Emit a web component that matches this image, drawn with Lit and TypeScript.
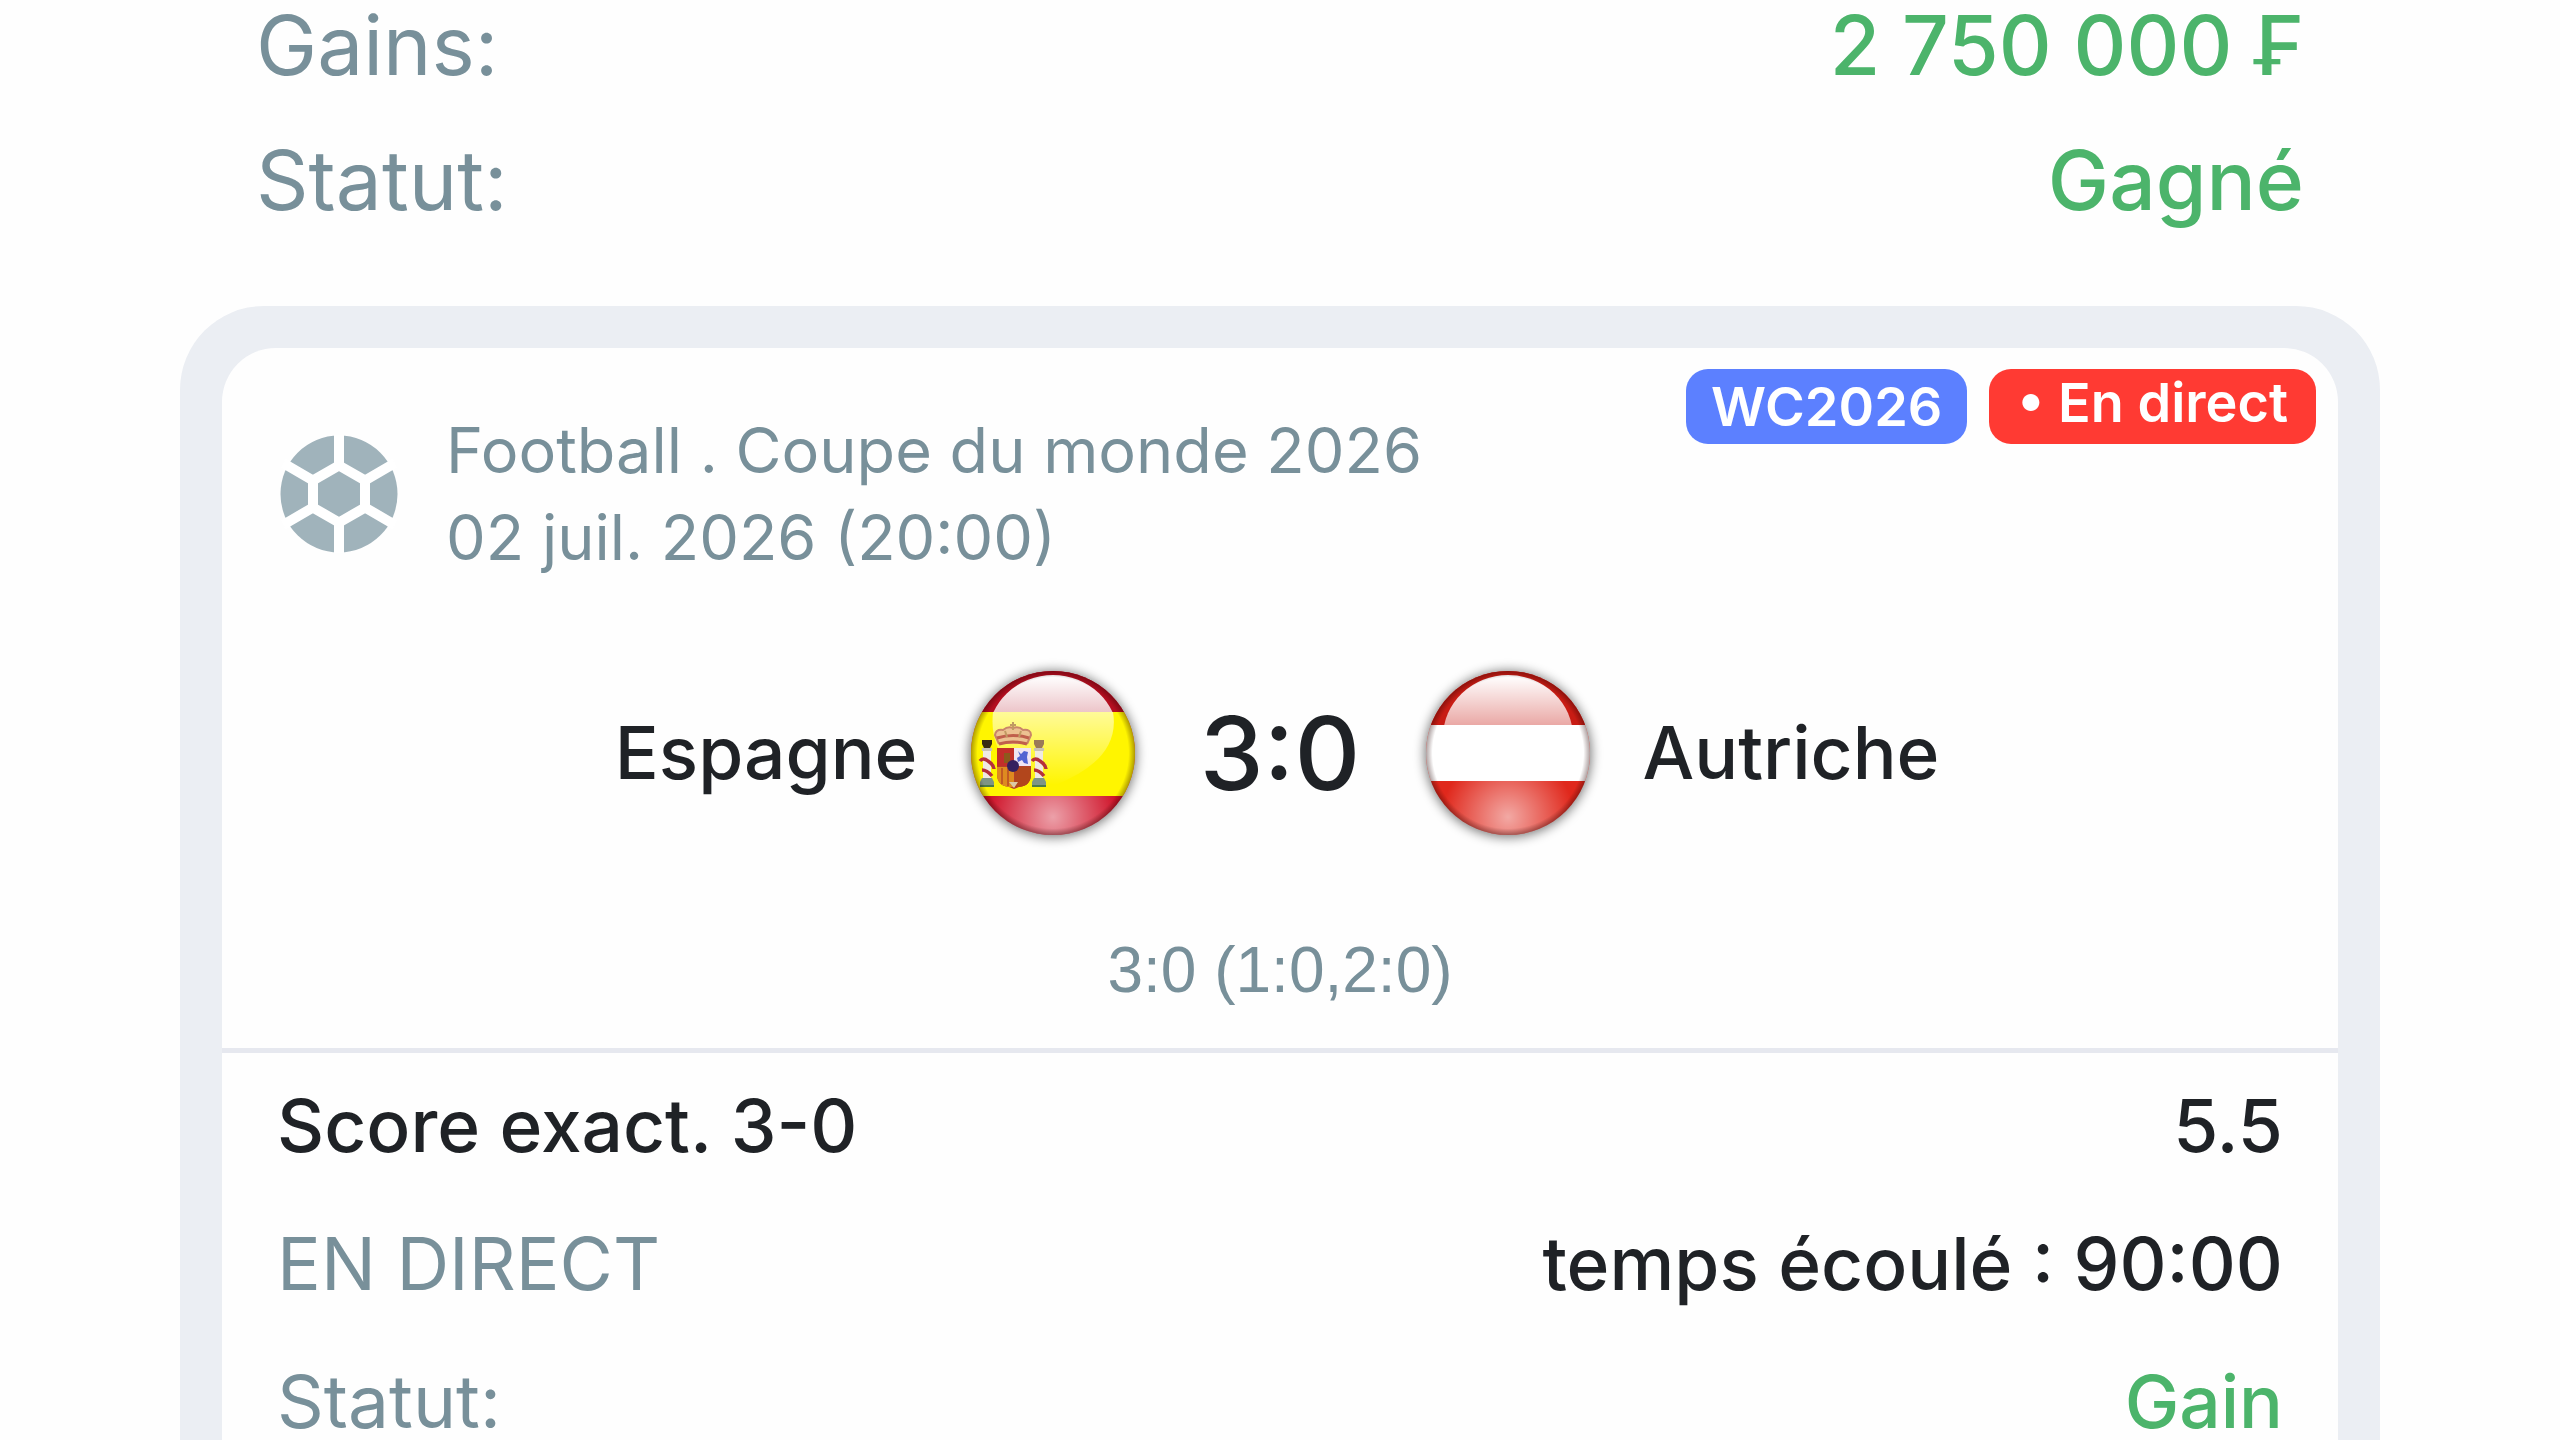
import { LitElement, html, css, svg } from "lit";
import { customElement, property } from "lit/decorators.js";

@customElement("ball-icon")
class BallIcon extends LitElement {
  static styles = css`
    :host { display: block; flex: none; }
    .ball { display: block; width: 118px; height: 118px; }
    .panel { fill: #a0b3bb; }
    .seam { fill: none; stroke: #ffffff; stroke-width: 10; stroke-linejoin: miter; }
  `;
  render() {
    return html`<svg class="ball" viewBox="0 0 118 118" aria-hidden="true">
      <circle class="panel" cx="59" cy="59" r="58.5" />
      <path class="seam" d="M59 30.5 L85 45.5 V72.5 L59 87.5 L33 72.5 V45.5 Z" />
      <path class="seam" d="M59 30.5 V-4 M85 45.5 L115 28 M85 72.5 L115 90 M59 87.5 V122 M33 72.5 L3 90 M33 45.5 L3 28" />
    </svg>`;
  }
}

const pillar = (x: number, cap: string) => svg`
  <g transform="translate(${x} 0)">
    <rect x="-4" y="77" width="8" height="34" fill="#efe9e2" />
    <path d="M-5 69 h10 v4 l-2 4 h-6 l-2 -4 z" fill=${cap} />
    <path d="M-5 77 h10 v3 h-10 z" fill="#c9c2b4" />
    <path d="M-7 90 q3 -4 8 0 q6 4 6 8 M-5 99 q5 0 10 6" fill="none" stroke="#b5303a" stroke-width="3.500" />
    <path d="M-5 107 h10 l2 4 v5 h-14 v-5 z" fill="#7f9585" />
    <path d="M-7 114 h14 v2 h-14 z" fill="#4d7a4a" />
  </g>`;

const spainArms = svg`
  <g>
    ${pillar(16, "#3a2a12")}
    ${pillar(68, "#9a7a58")}
    <path d="M26 77 h34 v26 q0 12 -12 13 l-5 2 l-5 -2 q-12 -1 -12 -13 z" fill="#b5402a" />
    <path d="M26 77 h17 v18 h-17 z" fill="#c22f2a" />
    <path d="M33 82 h6 v10 h-6 z" fill="#8d5a1c" />
    <path d="M43 77 h17 v18 h-17 z" fill="#f0e4f2" />
    <path d="M47 80 l3 3 3 -3 4 1 -1 5 1 7 -4 -1 -2 -3 -4 2 -1 -4 3 -2 z" fill="#5263d2" />
    <path d="M26 96 h17 v20 h-5 q-12 -1 -12 -13 z" fill="#de8a20" />
    <path d="M31 97 v16 M37 97 v18" stroke="#c25a22" stroke-width="2" />
    <path d="M44 96 h16 v7 q0 12 -12 13 h-4 z" fill="#b2461c" />
    <circle cx="42" cy="95" r="6" fill="#35205f" />
    <path d="M38 111 h9 l-4 6 z" fill="#dcc9a4" />
    <path d="M28 73 l-4 -9 q1 -6 8 -5 q5 -4 10 -2 q6 -2 10 2 q8 -1 8 5 l-4 9 z" fill="#ecc191" />
    <path d="M28 73 l-4 -9 q1 -6 8 -5 q5 -4 10 -2 q6 -2 10 2 q8 -1 8 5 l-4 9" fill="none" stroke="#c98569" stroke-width="2" />
    <path d="M26 67 q16 -5 32 0 M28 73 q14 -4 28 0" fill="none" stroke="#c0604c" stroke-width="3" />
    <path d="M42 51 v8 M39 54 h6 M34 60 l2 6 M50 60 l-2 6" stroke="#c09a62" stroke-width="2" />
  </g>`;

@customElement("team-flag")
class TeamFlag extends LitElement {
  @property() country = "";
  static styles = css`
    :host { display: block; flex: none; }
    .flag { display: block; width: 164px; height: 164px; overflow: visible; }
    .shadow { fill: #000000; opacity: 0.55; filter: blur(6px); }
  `;
  render() {
    const spain = this.country === "Espagne";
    const red = spain ? "#cf1228" : "#e0281c";
    const dark = spain ? "#b40e20" : "#c81c14";
    const top = spain ? 41 : 54;
    const bottom = spain ? 125 : 110;
    return html`<svg class="flag" viewBox="0 0 164 164" role="img" aria-label=${this.country}>
      <defs>
        <clipPath id="disc"><circle cx="82" cy="82" r="82" /></clipPath>
        <clipPath id="band"><rect x="0" y="0" width="164" height=${top} /></clipPath>
        <linearGradient id="gloss" gradientUnits="userSpaceOnUse" x1="0" y1="5" x2="0" y2=${top}>
          <stop offset="0" stop-color="#fff" /><stop offset="1" stop-color="#fff" stop-opacity=${spain ? 0.76 : 0.62} />
        </linearGradient>
        <linearGradient id="sheen" x1="0" y1="0" x2="0" y2="1">
          <stop offset="0" stop-color="#fff" stop-opacity="0.6" /><stop offset="1" stop-color="#fff" stop-opacity="0" />
        </linearGradient>
        <radialGradient id="glow" gradientUnits="userSpaceOnUse" cx="82" cy="146" r="66">
          <stop offset="0" stop-color="#fff" stop-opacity="0.6" /><stop offset="1" stop-color="#fff" stop-opacity="0" />
        </radialGradient>
        <radialGradient id="edge" gradientUnits="userSpaceOnUse" cx="82" cy="82" r="82">
          <stop offset="0.92" stop-color="#200" stop-opacity="0" /><stop offset="1" stop-color="#200" stop-opacity="0.36" />
        </radialGradient>
      </defs>
      <circle class="shadow" cx="82" cy="83" r="83" />
      <g clip-path="url(#disc)">
        <rect width="164" height="164" fill=${red} />
        <rect width="164" height=${top} fill=${dark} />
        <rect y=${bottom} width="164" height="56" fill="url(#glow)" />
        <rect y=${top} width="164" height=${bottom - top} fill=${spain ? "#fff500" : "#ffffff"} />
        <ellipse cx="82" cy="66" rx="65" ry="62" fill="url(#gloss)" clip-path="url(#band)" />
        ${spain ? svg`<path d="M22 41 H142 Q150 88 84 114 Q16 100 22 41 Z" fill="url(#sheen)" />` : ""}
        ${spain ? spainArms : ""}
        <rect width="164" height="164" fill="url(#edge)" />
      </g>
    </svg>`;
  }
}

interface Line { label: string; value: string; labelTone?: string; valueTone?: string }

const summary: Line[] = [
  { label: "Gains:", value: "2 750 000 ₣", valueTone: "won" },
  { label: "Statut:", value: "Gagné", valueTone: "won" },
];
const details: Line[] = [
  { label: "Score exact. 3-0", value: "5.5", labelTone: "strong" },
  { label: "EN DIRECT", value: "temps écoulé : 90:00" },
  { label: "Statut:", value: "Gain", valueTone: "won" },
];

@customElement("app-root")
class AppRoot extends LitElement {
  static styles = css`
    :host {
      display: block;
      height: 100vh;
      overflow: hidden;
      background: #fefefe;
      color: #1f2226;
      font-family: Inter, "Liberation Sans", sans-serif;
    }
    dl, dd, p, h2 { margin: 0; font-weight: inherit; font-size: inherit; }
    .line { display: flex; justify-content: space-between; white-space: nowrap; }
    dt { color: #78909a; }
    dd { font-weight: 500; }
    dt.strong { color: #1f2226; font-weight: 500; }
    dd.won { color: #4cb46b; }
    .summary { padding: 0 256px; margin-top: -22px; font-size: 82px; line-height: 135px; }
    .card {
      margin: 58px 180px 0;
      padding: 42px 42px 0;
      border-radius: 84px 84px 0 0;
      background: #ebeef3;
    }
    .sheet { border-radius: 54px 54px 0 0; background: #fefefe; }
    .head { display: flex; align-items: flex-start; padding: 21px 22px 0 58px; }
    .head ball-icon { margin-top: 66px; }
    .event { flex: 1; margin: 38px 0 0 48px; font-size: 63px; line-height: 87px; color: #78909a; }
    .badges { display: flex; gap: 22px; }
    .badge {
      padding: 0 25px;
      border-radius: 22px;
      color: #ffffff;
      font-size: 54px;
      font-weight: 600;
      line-height: 75px;
    }
    .cup { background: #5c80ff; }
    .live { background: #ff3a33; line-height: 67px; padding: 0 28px 8px; }
    .teams {
      display: grid;
      grid-template-columns: 1fr auto auto auto 1fr;
      align-items: center;
      padding-top: 90px;
      font-size: 73px;
      font-weight: 500;
      line-height: 164px;
    }
    .home { text-align: right; padding-right: 53px; }
    .away { padding-left: 53px; }
    .score { width: 291px; text-align: center; font-size: 102px; }
    .periods {
      margin-top: 92px;
      padding-bottom: 35px;
      text-align: center;
      font-family: "Liberation Sans", Arial, sans-serif;
      font-size: 64px;
      line-height: 86px;
      color: #78909a;
    }
    .details { border-top: 5px solid #e6e8ef; padding: 4px 55px 0; font-size: 73px; line-height: 138px; }
  `;

  private lines(items: Line[]) {
    return items.map(
      (l) => html`<div class="line"><dt class=${l.labelTone ?? ""}>${l.label}</dt><dd class=${l.valueTone ?? ""}>${l.value}</dd></div>`
    );
  }

  render() {
    return html`
      <dl class="summary">${this.lines(summary)}</dl>
      <article class="card">
        <div class="sheet">
          <header class="head">
            <ball-icon></ball-icon>
            <div class="event">
              <p>Football . Coupe du monde 2026</p>
              <p>02 juil. 2026 (20:00)</p>
            </div>
            <div class="badges">
              <span class="badge cup">WC2026</span>
              <span class="badge live">• En direct</span>
            </div>
          </header>
          <h2 class="teams">
            <span class="home">Espagne</span>
            <team-flag country="Espagne"></team-flag>
            <span class="score">3:0</span>
            <team-flag country="Autriche"></team-flag>
            <span class="away">Autriche</span>
          </h2>
          <p class="periods">3:0 (1:0,2:0)</p>
          <dl class="details">${this.lines(details)}</dl>
        </div>
      </article>
    `;
  }
}
